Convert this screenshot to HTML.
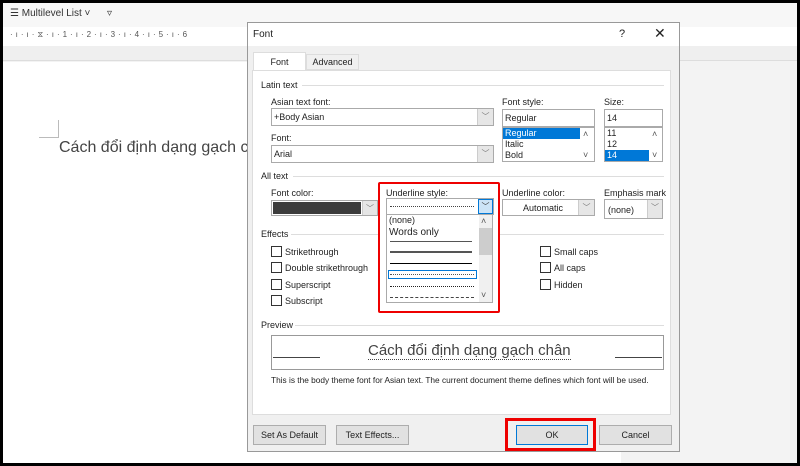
<!DOCTYPE html>
<html><head><meta charset="utf-8"><style>
*{box-sizing:border-box;margin:0;padding:0}
body{width:800px;height:466px;overflow:hidden;background:#000;font-family:"Liberation Sans",sans-serif;font-size:9px;color:#222;position:relative}
.a{position:absolute}
.in{background:#fff;border:1px solid #aaa}
.btn{background:#e1e1e1;border:1px solid #adadad;text-align:center;line-height:18px;font-size:9px}
.cb{width:11px;height:11px;border:1px solid #333;background:#fff}
.dd{background:#e6e6e6;border-left:1px solid #ccc;text-align:center;color:#777;font-size:8px;line-height:15px}
.lbl{font-size:9px}
.hl{height:1px;background:#ddd}
</style></head><body>
<div class="a" style="left:3px;top:3px;width:794px;height:460px;background:#f3f3f3"></div>
<div class="a" style="left:3px;top:3px;width:794px;height:24px;background:#f7f7f7"></div>
<div class="a" style="left:10px;top:8px;font-size:10px;color:#333">☰ Multilevel List ˅ &nbsp;&nbsp;&nbsp;&nbsp;&nbsp;▿</div>
<div class="a" style="left:3px;top:27px;width:794px;height:19px;background:#fff"></div>
<div class="a" style="left:10px;top:30px;font-size:8px;color:#555;letter-spacing:3px">·ı·ı·⧖·ı·1·ı·2·ı·3·ı·4·ı·5·ı·6</div>
<div class="a" style="left:3px;top:46px;width:794px;height:15px;background:#efefef;border-bottom:1px solid #ddd"></div>
<div class="a" style="left:3px;top:62px;width:618px;height:401px;background:#fff"></div>
<div class="a" style="left:39px;top:120px;width:20px;height:18px;border-right:1px solid #bbb;border-bottom:1px solid #bbb"></div>
<div class="a" style="left:59px;top:139px;font-size:16px;color:#444;white-space:nowrap">Cách đổi định dạng gạch chân</div>

<div class="a" style="left:247px;top:22px;width:433px;height:430px;background:#f0f0f0;border:1px solid #999"></div>
<div class="a" style="left:248px;top:23px;width:431px;height:23px;background:#fff"></div>
<div class="a" style="left:253px;top:29px;font-size:10px">Font</div>
<div class="a" style="left:619px;top:28px;font-size:11px">?</div>
<div class="a" style="left:654px;top:25px;font-size:14px">✕</div>
<div class="a" style="left:253px;top:52px;width:53px;height:19px;background:#fff;border:1px solid #ddd;border-bottom:none;text-align:center;line-height:19px">Font</div>
<div class="a" style="left:306px;top:54px;width:53px;height:16px;background:#f0f0f0;border:1px solid #ddd;text-align:center;line-height:15px">Advanced</div>
<div class="a" style="left:252px;top:70px;width:419px;height:345px;background:#fff;border:1px solid #ddd"></div>

<div class="a" style="left:261px;top:80px">Latin text</div><div class="a hl" style="left:302px;top:85px;width:362px"></div>
<div class="a" style="left:271px;top:97px">Asian text font:</div>
<div class="a in" style="left:271px;top:108px;width:223px;height:18px;padding:3px 2px">+Body Asian</div>
<div class="a dd" style="left:477px;top:109px;width:16px;height:16px">﹀</div>
<div class="a" style="left:271px;top:133px">Font:</div>
<div class="a in" style="left:271px;top:145px;width:223px;height:18px;padding:3px 2px">Arial</div>
<div class="a dd" style="left:477px;top:146px;width:16px;height:16px">﹀</div>
<div class="a" style="left:502px;top:97px">Font style:</div>
<div class="a in" style="left:502px;top:109px;width:93px;height:18px;padding:3px 2px">Regular</div>
<div class="a in" style="left:502px;top:127px;width:93px;height:35px"></div>
<div class="a" style="left:503px;top:128px;width:77px;height:11px;background:#0078d7;color:#fff;padding-left:2px">Regular</div>
<div class="a" style="left:505px;top:139px">Italic</div><div class="a" style="left:505px;top:150px">Bold</div>
<div class="a" style="left:583px;top:129px;color:#555">˄</div><div class="a" style="left:583px;top:150px;color:#555">˅</div>
<div class="a" style="left:604px;top:97px">Size:</div>
<div class="a in" style="left:604px;top:109px;width:59px;height:18px;padding:3px 2px">14</div>
<div class="a in" style="left:604px;top:127px;width:59px;height:35px"></div>
<div class="a" style="left:607px;top:128px">11</div><div class="a" style="left:607px;top:139px">12</div>
<div class="a" style="left:605px;top:150px;width:44px;height:11px;background:#0078d7;color:#fff;padding-left:2px">14</div>
<div class="a" style="left:652px;top:129px;color:#555">˄</div><div class="a" style="left:652px;top:150px;color:#555">˅</div>

<div class="a" style="left:261px;top:171px">All text</div><div class="a hl" style="left:293px;top:176px;width:371px"></div>
<div class="a" style="left:271px;top:188px">Font color:</div>
<div class="a in" style="left:271px;top:200px;width:107px;height:16px"></div>
<div class="a" style="left:273px;top:202px;width:88px;height:12px;background:#3c3c3c"></div>
<div class="a dd" style="left:362px;top:201px;width:15px;height:14px">﹀</div>
<div class="a" style="left:502px;top:188px">Underline color:</div>
<div class="a in" style="left:502px;top:199px;width:93px;height:17px;padding:3px 0 0 20px">Automatic</div>
<div class="a dd" style="left:578px;top:200px;width:16px;height:15px">﹀</div>
<div class="a" style="left:604px;top:188px">Emphasis mark</div>
<div class="a in" style="left:604px;top:199px;width:59px;height:20px;padding:5px 3px">(none)</div>
<div class="a dd" style="left:647px;top:200px;width:15px;height:18px">﹀</div>

<div class="a" style="left:261px;top:229px">Effects</div><div class="a hl" style="left:291px;top:234px;width:373px"></div>
<div class="a cb" style="left:271px;top:246px"></div><div class="a" style="left:285px;top:247px">Strikethrough</div>
<div class="a cb" style="left:271px;top:262px"></div><div class="a" style="left:285px;top:263px">Double strikethrough</div>
<div class="a cb" style="left:271px;top:279px"></div><div class="a" style="left:285px;top:280px">Superscript</div>
<div class="a cb" style="left:271px;top:295px"></div><div class="a" style="left:285px;top:296px">Subscript</div>
<div class="a cb" style="left:540px;top:246px"></div><div class="a" style="left:554px;top:247px">Small caps</div>
<div class="a cb" style="left:540px;top:262px"></div><div class="a" style="left:554px;top:263px">All caps</div>
<div class="a cb" style="left:540px;top:279px"></div><div class="a" style="left:554px;top:280px">Hidden</div>

<div class="a" style="left:378px;top:182px;width:122px;height:131px;background:#fff;border:2px solid #e00;border-radius:2px"></div>
<div class="a" style="left:386px;top:188px">Underline style:</div>
<div class="a in" style="left:386px;top:198px;width:108px;height:17px"></div>
<div class="a" style="left:390px;top:206px;width:84px;border-top:1px dotted #444"></div>
<div class="a" style="left:478px;top:199px;width:15px;height:15px;background:#cce4f7;border:1px solid #0078d7;color:#333;text-align:center;font-size:8px;line-height:13px">﹀</div>
<div class="a" style="left:386px;top:214px;width:107px;height:89px;border:1px solid #aaa;background:#fff"></div>
<div class="a" style="left:389px;top:215px">(none)</div>
<div class="a" style="left:389px;top:227px;font-size:10px">Words only</div>
<div class="a" style="left:390px;top:241px;width:82px;height:1px;background:#555"></div>
<div class="a" style="left:390px;top:251px;width:82px;height:2px;background:#555"></div>
<div class="a" style="left:390px;top:263px;width:82px;height:1px;background:#000"></div>
<div class="a" style="left:388px;top:270px;width:89px;height:9px;border:1px solid #0078d7"></div>
<div class="a" style="left:390px;top:274px;width:84px;border-top:1px dotted #555"></div>
<div class="a" style="left:390px;top:286px;width:84px;border-top:1px dotted #222"></div>
<div class="a" style="left:390px;top:297px;width:84px;border-top:1px dashed #444"></div>
<div class="a" style="left:479px;top:215px;width:13px;height:87px;background:#f0f0f0"></div>
<div class="a" style="left:479px;top:228px;width:13px;height:27px;background:#cdcdcd"></div>
<div class="a" style="left:481px;top:216px;color:#555">˄</div><div class="a" style="left:481px;top:290px;color:#555">˅</div>

<div class="a" style="left:261px;top:320px">Preview</div><div class="a hl" style="left:295px;top:325px;width:369px"></div>
<div class="a" style="left:271px;top:335px;width:393px;height:35px;border:1px solid #999;background:#fff"></div>
<div class="a" style="left:273px;top:357px;width:47px;height:1px;background:#444"></div>
<div class="a" style="left:615px;top:357px;width:47px;height:1px;background:#444"></div>
<div class="a" style="left:368px;top:342px;font-size:15px;color:#444;border-bottom:1px dotted #444;line-height:17px">Cách đổi định dạng gạch chân</div>
<div class="a" style="left:271px;top:375px;font-size:8.3px">This is the body theme font for Asian text. The current document theme defines which font will be used.</div>

<div class="a btn" style="left:253px;top:425px;width:73px;height:20px">Set As Default</div>
<div class="a btn" style="left:336px;top:425px;width:73px;height:20px">Text Effects...</div>
<div class="a" style="left:505px;top:418px;width:91px;height:33px;border:3px solid #e00"></div>
<div class="a btn" style="left:516px;top:425px;width:72px;height:20px;border-color:#0078d7">OK</div>
<div class="a btn" style="left:599px;top:425px;width:73px;height:20px">Cancel</div>
</body></html>
